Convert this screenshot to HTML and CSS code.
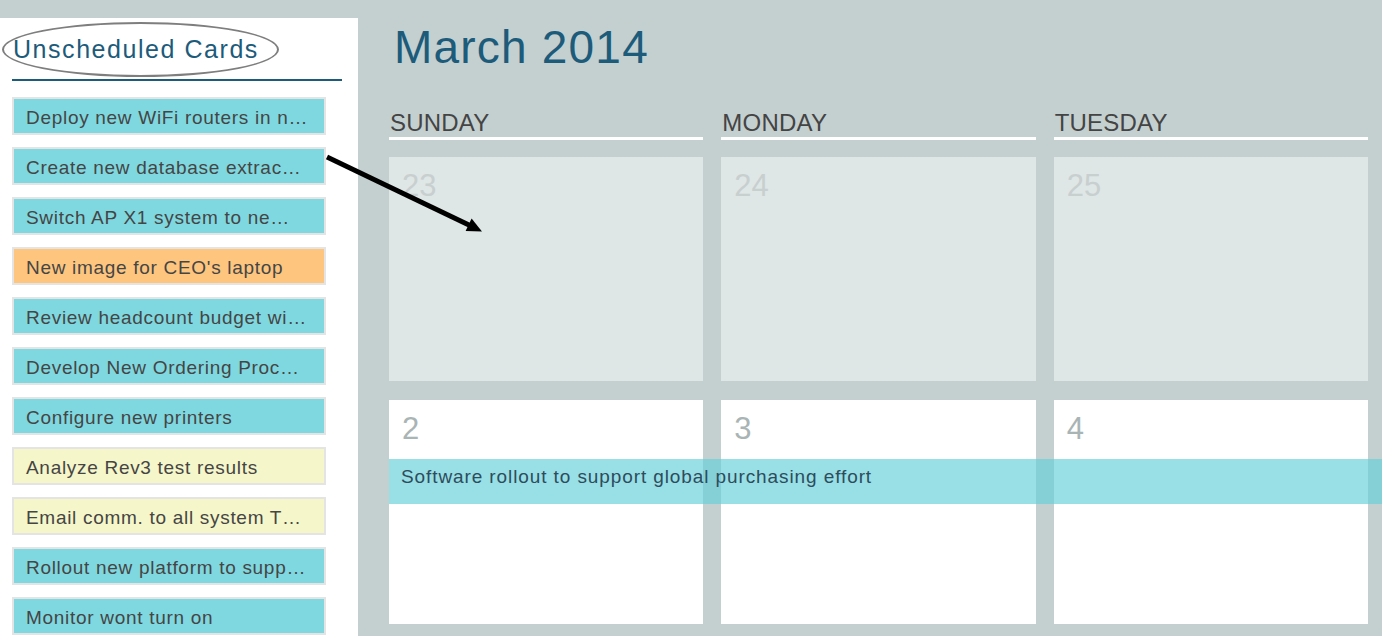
FILE: index.html
```html
<!DOCTYPE html>
<html lang="en">
<head>
<meta charset="utf-8">
<title>Scheduler</title>
<link rel="stylesheet" href="styles.css">
</head>
<body>
<div class="app">
  <aside class="sidebar">
    <div class="sidebar-head">
      <h2 class="sidebar-title">Unscheduled Cards</h2>
    </div>
    <ul class="cards">
      <li class="card card-blue">Deploy new WiFi routers in n…</li>
      <li class="card card-blue">Create new database extrac…</li>
      <li class="card card-blue">Switch AP X1 system to ne…</li>
      <li class="card card-orange">New image for CEO's laptop</li>
      <li class="card card-blue">Review headcount budget wi…</li>
      <li class="card card-blue">Develop New Ordering Proc…</li>
      <li class="card card-blue">Configure new printers</li>
      <li class="card card-yellow">Analyze Rev3 test results</li>
      <li class="card card-yellow">Email comm. to all system T…</li>
      <li class="card card-blue">Rollout new platform to supp…</li>
      <li class="card card-blue">Monitor wont turn on</li>
    </ul>
  </aside>
  <main class="calendar">
    <h1 class="month">March 2014</h1>
    <div class="weekdays">
      <div class="weekday">SUNDAY</div>
      <div class="weekday">MONDAY</div>
      <div class="weekday">TUESDAY</div>
    </div>
    <div class="week week-past">
      <div class="day"><span class="day-num">23</span></div>
      <div class="day"><span class="day-num">24</span></div>
      <div class="day"><span class="day-num">25</span></div>
    </div>
    <div class="week week-current">
      <div class="day"><span class="day-num">2</span></div>
      <div class="day"><span class="day-num">3</span></div>
      <div class="day"><span class="day-num">4</span></div>
      <div class="event">Software rollout to support global purchasing effort</div>
    </div>
  </main>
  <svg class="drag-arrow" width="1382" height="636" viewBox="0 0 1382 636">
    <line x1="327" y1="157" x2="470" y2="225.5" stroke="#000" stroke-width="5" stroke-linecap="butt"/>
    <polygon points="482,231.5 465.6,231 471.6,218.6" fill="#000"/>
  </svg>
</div>
</body>
</html>
```

FILE: styles.css
```css
* {
  box-sizing: border-box;
}

html, body {
  margin: 0;
  padding: 0;
}

body {
  font-family: "Liberation Sans", Arial, sans-serif;
  background: #c4d0d0;
}

.app {
  position: relative;
  display: flex;
  width: 1382px;
  height: 636px;
  overflow: hidden;
  background: #c4d0d0;
}

/* ---------- Sidebar ---------- */
.sidebar {
  flex: 0 0 358px;
  margin-top: 18px;
  padding-top: 4px;
  background: #ffffff;
}

.sidebar-head {
  margin: 0 16px 0 12px;
  padding-bottom: 2px;
  border-bottom: 2px solid #1d5b7b;
}

.sidebar-title {
  display: inline-block;
  margin: 0 0 0 -10px;
  width: 277px;
  height: 55px;
  padding: 13px 0 0 9px;
  border: 2.5px solid #7e7e7e;
  border-radius: 50%;
  font-size: 25px;
  line-height: 25px;
  font-weight: normal;
  letter-spacing: 1.55px;
  color: #1d5b7b;
  white-space: nowrap;
}

.cards {
  list-style: none;
  margin: 16px 0 0 12px;
  padding: 0;
  display: flex;
  flex-direction: column;
  gap: 12px;
}

.card {
  width: 314px;
  height: 38px;
  padding: 3px 0 0 12px;
  border: 2px solid #e4e4e4;
  font-size: 19px;
  line-height: 31px;
  letter-spacing: 0.7px;
  color: #454545;
  white-space: nowrap;
  overflow: hidden;
}

.card-blue {
  background: #7fd8e0;
}

.card-orange {
  background: #fec57f;
}

.card-yellow {
  background: #f5f6c9;
}

/* ---------- Calendar ---------- */
.calendar {
  flex: 1;
  padding: 24px 14px 0 31px;
}

.month {
  margin: 0;
  padding-left: 5px;
  font-size: 46px;
  line-height: 46px;
  font-weight: normal;
  letter-spacing: 1.2px;
  color: #1d5b7b;
}

.weekdays,
.week {
  display: grid;
  grid-template-columns: repeat(3, 1fr);
  column-gap: 18px;
}

.weekdays {
  margin-top: 41px;
}

.weekday {
  padding: 0 0 2px 1px;
  border-bottom: 3px solid #ffffff;
  font-size: 24px;
  line-height: 24px;
  letter-spacing: 0.2px;
  color: #444444;
}

.week {
  position: relative;
  height: 224px;
}

.week-past {
  margin-top: 17px;
}

.week-current {
  margin-top: 19px;
}

.day {
  padding: 13px 0 0 13px;
}

.week-past .day {
  background: #dfe6e6;
}

.week-current .day {
  background: #ffffff;
}

.day-num {
  font-size: 31px;
  line-height: 31px;
}

.week-past .day-num {
  color: #c8cfcf;
}

.week-current .day-num {
  color: #a9b4b4;
}

.event {
  position: absolute;
  top: 59px;
  left: 0;
  right: -14px;
  height: 45px;
  padding: 8px 0 0 12px;
  background: rgba(99, 208, 217, 0.66);
  font-size: 19px;
  line-height: 19px;
  letter-spacing: 0.9px;
  color: #2e4c5c;
  white-space: nowrap;
}

/* ---------- Drag annotation ---------- */
.drag-arrow {
  position: absolute;
  left: 0;
  top: 0;
  pointer-events: none;
}
```
